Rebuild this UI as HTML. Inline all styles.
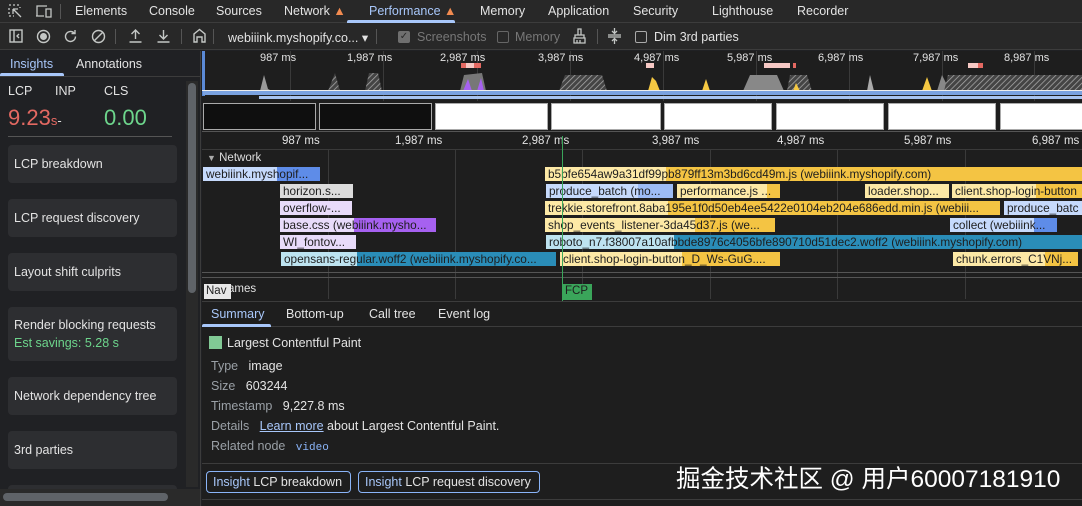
<!DOCTYPE html>
<html><head><meta charset="utf-8"><style>
*{box-sizing:border-box;margin:0;padding:0}
body{width:1082px;height:506px;overflow:hidden;background:#202124;font-family:"Liberation Sans",sans-serif;font-size:12px;color:#e3e3e3;position:relative}
.a{position:absolute}
.tabs{left:0;top:0;width:1082px;height:23px;background:#282828;border-bottom:1px solid #3c3c3c}
.tabs span{position:absolute;top:4px;font-size:12.5px;color:#e3e3e3}
.tb{left:0;top:23px;width:1082px;height:27px;background:#282828;border-bottom:1px solid #3c3c3c}
.tb span{position:absolute;top:7px;font-size:12.5px}
.side{left:0;top:51px;width:201px;height:455px;background:#202124;border-right:1px solid #3c3c3c}
.card{position:absolute;left:8px;width:169px;height:38px;background:#2d2e31;border-radius:4px;font-size:12.5px;padding:12px 6px;color:#e3e3e3}
.tl{left:202px;top:51px;width:880px;height:250px;background:#1e1e1e}
.bar{position:absolute;height:14px;font-size:11.8px;line-height:14px;color:#1e1e1e;white-space:nowrap;overflow:hidden;padding-left:3px}
.lbl{position:absolute;font-size:11px;color:#e3e3e3}
.vl{position:absolute;width:1px;background:#3a3a3a}
.shot{position:absolute;top:52px;height:27px;border:1px solid #aaa}
.bt{position:absolute;font-size:12.5px}
.k{color:#9aa0a6}
</style></head><body>
<div class="a tabs">
 <svg class="a" style="left:8px;top:4px" width="16" height="15" viewBox="0 0 16 15" fill="none" stroke="#c4c7c5" stroke-width="1.3"><path d="M1 1h2M5 1h2M9 1h2M1 4v2M1 8v2M1 12h2M5 12h1M12 3v1M5 5l8 8M5 5v5M5 5h5"/></svg>
 <svg class="a" style="left:35px;top:4px" width="18" height="15" viewBox="0 0 18 15" fill="none" stroke="#c4c7c5" stroke-width="1.3"><path d="M2 12V2h10M1 12h8M11 5h5v8h-5z"/></svg>
 <div class="a" style="left:60px;top:4px;width:1px;height:15px;background:#555"></div>
 <span style="left:75px">Elements</span><span style="left:149px">Console</span><span style="left:216px">Sources</span>
 <span style="left:284px">Network <b style="color:#f28b50">▲</b></span>
 <span style="left:369px;color:#a8c7fa">Performance <b style="color:#f28b50">▲</b></span>
 <div class="a" style="left:347px;top:20px;width:108px;height:3px;background:#a8c7fa;border-radius:2px 2px 0 0"></div>
 <span style="left:480px">Memory</span><span style="left:548px">Application</span><span style="left:633px">Security</span><span style="left:712px">Lighthouse</span><span style="left:797px">Recorder</span>
</div>
<div class="a tb">
 <svg class="a" style="left:9px;top:6px" width="14" height="14" viewBox="0 0 14 14" fill="none" stroke="#c4c7c5" stroke-width="1.4"><rect x="1" y="1" width="12" height="12"/><path d="M5 1v12M10 5l-2 2 2 2"/></svg>
 <svg class="a" style="left:36px;top:6px" width="15" height="15" viewBox="0 0 15 15"><circle cx="7.5" cy="7.5" r="6" fill="none" stroke="#c4c7c5" stroke-width="1.4"/><circle cx="7.5" cy="7.5" r="3.5" fill="#c4c7c5"/></svg>
 <svg class="a" style="left:63px;top:6px" width="15" height="15" viewBox="0 0 15 15" fill="none" stroke="#c4c7c5" stroke-width="1.4"><path d="M12.5 7.5a5 5 0 1 1-1.5-3.6M12 1v3.5H8.5"/></svg>
 <svg class="a" style="left:91px;top:6px" width="15" height="15" viewBox="0 0 15 15" fill="none" stroke="#c4c7c5" stroke-width="1.4"><circle cx="7.5" cy="7.5" r="6"/><path d="M3.5 11.5l8-8"/></svg>
 <div class="a" style="left:115px;top:6px;width:1px;height:15px;background:#555"></div>
 <svg class="a" style="left:128px;top:5px" width="15" height="16" viewBox="0 0 15 16" fill="none" stroke="#c4c7c5" stroke-width="1.4"><path d="M7.5 11V2M3.5 6l4-4 4 4M1.5 14h12"/></svg>
 <svg class="a" style="left:156px;top:5px" width="15" height="16" viewBox="0 0 15 16" fill="none" stroke="#c4c7c5" stroke-width="1.4"><path d="M7.5 2v9M3.5 7l4 4 4-4M1.5 14h12"/></svg>
 <div class="a" style="left:181px;top:6px;width:1px;height:15px;background:#555"></div>
 <svg class="a" style="left:192px;top:5px" width="15" height="16" viewBox="0 0 15 16" fill="none" stroke="#c4c7c5" stroke-width="1.4"><path d="M2 14V6l5.5-4.5L13 6v8h-3V9H5v5z"/></svg>
 <div class="a" style="left:213px;top:6px;width:1px;height:15px;background:#555"></div>
 <span style="left:228px">webiiink.myshopify.co... ▾</span>
 <div class="a" style="left:376px;top:6px;width:1px;height:15px;background:#555"></div>
 <div class="a" style="left:398px;top:8px;width:12px;height:12px;background:#6f6f6f;border-radius:2px;color:#282828;font-size:10px;line-height:12px;text-align:center">✓</div>
 <span style="left:417px;color:#777">Screenshots</span>
 <div class="a" style="left:497px;top:8px;width:12px;height:12px;border:1px solid #666;border-radius:2px"></div>
 <span style="left:515px;color:#777">Memory</span>
 <svg class="a" style="left:572px;top:5px" width="15" height="16" viewBox="0 0 15 16" fill="none" stroke="#c4c7c5" stroke-width="1.3"><path d="M6 1h3v6H6zM3 7h9v3H3zM2 10h11v5H2zM5 12v3M8 12v3"/></svg>
 <div class="a" style="left:597px;top:6px;width:1px;height:15px;background:#555"></div>
 <svg class="a" style="left:607px;top:4px" width="15" height="18" viewBox="0 0 15 18" fill="none" stroke="#c4c7c5" stroke-width="1.3"><path d="M1 8h13M1 10h13M7.5 1v5M5 4l2.5 2.5L10 4M7.5 17v-5M5 14l2.5-2.5L10 14"/></svg>
 <div class="a" style="left:635px;top:8px;width:12px;height:12px;border:1px solid #aaa;border-radius:2px"></div>
 <span style="left:654px">Dim 3rd parties</span>
</div>
<div class="a side">
 <div class="a" style="left:10px;top:6px;font-size:12.5px;color:#a8c7fa">Insights</div>
 <div class="a" style="left:0;top:22px;width:64px;height:3px;background:#a8c7fa;border-radius:2px 2px 0 0"></div>
 <div class="a" style="left:76px;top:6px;font-size:12.5px">Annotations</div>
 <div class="a" style="left:0;top:25px;width:200px;height:1px;background:#3c3c3c"></div>
 <div class="a" style="left:8px;top:33px;font-size:12.5px">LCP</div><div class="a" style="left:55px;top:33px;font-size:12.5px">INP</div><div class="a" style="left:104px;top:33px;font-size:12.5px">CLS</div>
 <div class="a" style="left:8px;top:54px;font-size:22px;color:#e46962">9.23<span style="font-size:13px">s</span><span style="font-size:13px;color:#ddd">-</span></div>
 <div class="a" style="left:104px;top:54px;font-size:22px;color:#6dd58c">0.00</div>
 <div class="a" style="left:8px;top:85px;width:164px;height:1px;background:#555"></div>
 <div class="card" style="top:94px">LCP breakdown</div>
 <div class="card" style="top:148px">LCP request discovery</div>
 <div class="card" style="top:202px">Layout shift culprits</div>
 <div class="card" style="top:256px;height:54px;padding-top:11px">Render blocking requests<div style="color:#6dd58c;margin-top:4px">Est savings: 5.28 s</div></div>
 <div class="card" style="top:326px">Network dependency tree</div>
 <div class="card" style="top:380px">3rd parties</div>
 <div class="card" style="top:434px;height:16px;padding:0"></div>
 <div class="a" style="left:186px;top:30px;width:12px;height:406px;background:#2a2a2a"></div>
 <div class="a" style="left:188px;top:32px;width:8px;height:210px;background:#5f6368;border-radius:4px"></div>
 <div class="a" style="left:0;top:438px;width:200px;height:17px;background:#2a2a2a"></div>
 <div class="a" style="left:3px;top:442px;width:165px;height:8px;background:#5f6368;border-radius:4px"></div>
</div>
<div class="a tl">
 <div class="vl" style="left:88px;top:0;height:50px"></div><div class="vl" style="left:181px;top:0;height:50px"></div><div class="vl" style="left:275px;top:0;height:50px"></div><div class="vl" style="left:368px;top:0;height:50px"></div><div class="vl" style="left:461px;top:0;height:50px"></div><div class="vl" style="left:554px;top:0;height:50px"></div><div class="vl" style="left:647px;top:0;height:50px"></div><div class="vl" style="left:740px;top:0;height:50px"></div><div class="vl" style="left:832px;top:0;height:50px"></div>
 <div class="lbl" style="left:58px;top:1px">987 ms</div><div class="lbl" style="left:145px;top:1px">1,987 ms</div><div class="lbl" style="left:238px;top:1px">2,987 ms</div><div class="lbl" style="left:336px;top:1px">3,987 ms</div><div class="lbl" style="left:432px;top:1px">4,987 ms</div><div class="lbl" style="left:525px;top:1px">5,987 ms</div><div class="lbl" style="left:616px;top:1px">6,987 ms</div><div class="lbl" style="left:711px;top:1px">7,987 ms</div><div class="lbl" style="left:802px;top:1px">8,987 ms</div>
 <div class="a" style="left:0;top:0;width:3px;height:45px;background:#5b8ad6"></div>
 <svg class="a" style="left:0;top:12px" width="880" height="28" viewBox="0 0 880 28">
  <defs><pattern id="h" width="4" height="4" patternUnits="userSpaceOnUse" patternTransform="rotate(45)"><rect width="4" height="4" fill="#444"/><path d="M0 0v4" stroke="#aaa" stroke-width="1.5"/></pattern></defs>
  <path d="M58 28L62 12 66 26 70 28z" fill="#999"/>
  <path d="M126 28L133 10 138 28z" fill="url(#h)"/><path d="M163 28L167 10 176 10 180 28z" fill="url(#h)"/>
  <path d="M258 28L262 12 280 10 284 28z" fill="#777"/><path d="M261 28L266 16 270 28zM275 28L279 15 282 28z" fill="#a661f0"/>
  <path d="M357 28L363 12 400 12 405 28z" fill="url(#h)"/>
  <path d="M446 28L450 14 454 18 458 28z" fill="#f5c842"/>
  <path d="M500 28L504 16 508 28z" fill="#f5c842"/><path d="M541 28L548 12 575 12 582 28z" fill="#888"/>
  <path d="M585 28L588 12 605 12 610 28z" fill="url(#h)"/><path d="M591 28L594 20 598 28z" fill="#f5c842"/>
  <path d="M665 28L668 12 672 28z" fill="#aaa"/>
  <path d="M720 28L725 14 730 28z" fill="#f5c842"/><path d="M735 28L740 12 748 28z" fill="#888"/><path d="M742 28L746 12 880 12 880 28z" fill="url(#h)"/>
  <path d="M0 27.5H880" stroke="#eee" stroke-width="1"/>
 </svg>
 <div class="a" style="left:259px;top:12px;width:20px;height:5px;background:#e46962"></div><div class="a" style="left:264px;top:12px;width:8px;height:5px;background:#f6c8c4"></div>
 <div class="a" style="left:444px;top:12px;width:8px;height:5px;background:#f6c8c4"></div>
 <div class="a" style="left:562px;top:12px;width:26px;height:5px;background:#f6c8c4"></div><div class="a" style="left:591px;top:12px;width:3px;height:5px;background:#e46962"></div>
 <div class="a" style="left:766px;top:12px;width:10px;height:5px;background:#f6c8c4"></div><div class="a" style="left:776px;top:12px;width:5px;height:5px;background:#e46962"></div>
 <div class="a" style="left:1px;top:40px;width:879px;height:4px;background:#7aa2e0"></div>
 <div class="a" style="left:57px;top:45px;width:823px;height:3px;background:#a8c4f0"></div>
 <div class="shot" style="left:1px;width:113px;background:#0f0f0f"></div>
 <div class="shot" style="left:117px;width:113px;background:#0f0f0f"></div>
 <div class="shot" style="left:233px;width:113px;background:#fff"></div>
 <div class="shot" style="left:349px;width:110px;background:#fff"></div>
 <div class="shot" style="left:462px;width:108px;background:#fff"></div>
 <div class="shot" style="left:574px;width:108px;background:#fff"></div>
 <div class="shot" style="left:686px;width:108px;background:#fff"></div>
 <div class="shot" style="left:798px;width:108px;background:#fff"></div>
 <div class="a" style="left:0;top:80px;width:880px;height:1px;background:#555"></div>
 <div class="lbl" style="left:80px;top:84px;font-size:11.5px">987 ms</div><div class="lbl" style="left:193px;top:84px;font-size:11.5px">1,987 ms</div><div class="lbl" style="left:320px;top:84px;font-size:11.5px">2,987 ms</div><div class="lbl" style="left:450px;top:84px;font-size:11.5px">3,987 ms</div><div class="lbl" style="left:575px;top:84px;font-size:11.5px">4,987 ms</div><div class="lbl" style="left:702px;top:84px;font-size:11.5px">5,987 ms</div><div class="lbl" style="left:830px;top:84px;font-size:11.5px">6,987 ms</div>
 <div class="vl" style="left:126px;top:98px;height:150px"></div><div class="vl" style="left:253px;top:98px;height:150px"></div><div class="vl" style="left:380px;top:98px;height:150px"></div><div class="vl" style="left:508px;top:98px;height:150px"></div><div class="vl" style="left:635px;top:98px;height:150px"></div><div class="vl" style="left:763px;top:98px;height:150px"></div>
 <div class="a" style="left:0;top:98px;width:880px;height:1px;background:#3a3a3a"></div>
 <div class="lbl" style="left:5px;top:101px;font-size:11.5px;color:#ddd"><span style="color:#aaa;font-size:9px">▼</span> Network</div>
 <div class="bar" style="left:1px;top:116px;width:117px;background:linear-gradient(90deg,#c6dafc 74px,#5e8ce8 74px)">webiiink.myshopif...</div>
 <div class="bar" style="left:78px;top:133px;width:73px;background:#dcdcdc">horizon.s...</div>
 <div class="bar" style="left:78px;top:150px;width:72px;background:#e8dbfa">overflow-...</div>
 <div class="bar" style="left:78px;top:167px;width:156px;background:linear-gradient(90deg,#e8dbfa 74px,#a661f0 74px)">base.css (webiiink.mysho...</div>
 <div class="bar" style="left:78px;top:184px;width:76px;background:#e8dbfa">WI_fontov...</div>
 <div class="bar" style="left:79px;top:201px;width:275px;background:linear-gradient(90deg,#bde3f0 76px,#2a8db8 76px)">opensans-regular.woff2 (webiiink.myshopify.co...</div>
 <div class="bar" style="left:343px;top:116px;width:537px;background:linear-gradient(90deg,#fde9a6 121px,#f4c443 121px)">b5bfe654aw9a31df99pb879ff13m3bd6cd49m.js (webiiink.myshopify.com)</div>
 <div class="bar" style="left:344px;top:133px;width:127px;background:linear-gradient(90deg,#c6dafc 92px,#9dbcf5 92px)">produce_batch (mo...</div>
 <div class="bar" style="left:475px;top:133px;width:103px;background:linear-gradient(90deg,#fde9a6 90px,#f4c443 90px)">performance.js ...</div>
 <div class="bar" style="left:663px;top:133px;width:84px;background:#fde9a6">loader.shop...</div>
 <div class="bar" style="left:750px;top:133px;width:130px;background:linear-gradient(90deg,#fde9a6 84px,#f4c443 84px)">client.shop-login-button</div>
 <div class="bar" style="left:343px;top:150px;width:455px;background:linear-gradient(90deg,#fde9a6 123px,#f4c443 123px)">trekkie.storefront.8aba195e1f0d50eb4ee5422e0104eb204e686edd.min.js (webiii...</div>
 <div class="bar" style="left:802px;top:150px;width:78px;background:#c6dafc">produce_batc</div>
 <div class="bar" style="left:343px;top:167px;width:230px;background:linear-gradient(90deg,#fde9a6 150px,#f4c443 150px)">shop_events_listener-3da45d37.js (we...</div>
 <div class="bar" style="left:748px;top:167px;width:107px;background:linear-gradient(90deg,#c6dafc 84px,#5e8ce8 84px)">collect (webiiink...</div>
 <div class="bar" style="left:344px;top:184px;width:536px;background:linear-gradient(90deg,#bde3f0 128px,#2a8db8 128px)">roboto_n7.f38007a10afbbde8976c4056bfe890710d51dec2.woff2 (webiiink.myshopify.com)</div>
 <div class="bar" style="left:358px;top:201px;width:220px;background:linear-gradient(90deg,#fde9a6 122px,#f4c443 122px)">client.shop-login-button_D_Ws-GuG....</div>
 <div class="bar" style="left:751px;top:201px;width:125px;background:linear-gradient(90deg,#fde9a6 92px,#f4c443 92px)">chunk.errors_C1VNj...</div>
 <div class="a" style="left:0;top:221px;width:880px;height:1px;background:#555"></div>
 <div class="a" style="left:0;top:226px;width:880px;height:1px;background:#555"></div>
 <div class="lbl" style="left:26px;top:232px;font-size:11.5px">ames</div>
 <div class="a" style="left:2px;top:233px;width:27px;height:15px;background:#e8e8e8;color:#222;font-size:11.5px;padding:1px 2px">Nav</div>
 <div class="a" style="left:360px;top:85px;width:1px;height:165px;background:#3aa55a"></div>
 <div class="a" style="left:360px;top:233px;width:30px;height:16px;background:#3aa55a;color:#1e1e1e;font-size:11.5px;padding:1px 3px">FCP</div>
</div>
<div class="a" style="left:202px;top:301px;width:880px;height:205px;background:#1e1e1e;border-top:1px solid #3c3c3c">
 <div class="a" style="left:0;top:0;width:880px;height:25px;border-bottom:1px solid #3c3c3c"></div>
 <div class="bt" style="left:9px;top:5px;color:#a8c7fa">Summary</div>
 <div class="a" style="left:0;top:22px;width:69px;height:3px;background:#a8c7fa;border-radius:2px 2px 0 0"></div>
 <div class="bt" style="left:84px;top:5px">Bottom-up</div><div class="bt" style="left:167px;top:5px">Call tree</div><div class="bt" style="left:236px;top:5px">Event log</div>
 <div class="a" style="left:7px;top:34px;width:13px;height:13px;background:#81c995"></div>
 <div class="bt" style="left:25px;top:34px">Largest Contentful Paint</div>
 <div class="bt" style="left:9px;top:57px"><span class="k">Type</span>&nbsp;&nbsp; image</div>
 <div class="bt" style="left:9px;top:77px"><span class="k">Size</span>&nbsp;&nbsp; 603244</div>
 <div class="bt" style="left:9px;top:97px"><span class="k">Timestamp</span>&nbsp;&nbsp; 9,227.8 ms</div>
 <div class="bt" style="left:9px;top:117px"><span class="k">Details</span>&nbsp;&nbsp; <span style="color:#a8c7fa;text-decoration:underline">Learn more</span> about Largest Contentful Paint.</div>
 <div class="bt" style="left:9px;top:137px"><span class="k">Related node</span>&nbsp;&nbsp; <span style="color:#8ab4f8;font-family:'Liberation Mono',monospace;font-size:11px">video</span></div>
 <div class="a" style="left:0;top:161px;width:880px;height:1px;background:#3c3c3c"></div>
 <div class="a" style="left:4px;top:169px;width:145px;height:22px;border:1px solid #8ab4f8;border-radius:4px;padding:3px 6px;font-size:12.5px;white-space:nowrap"><span style="color:#a8c7fa">Insight</span> LCP breakdown</div>
 <div class="a" style="left:156px;top:169px;width:182px;height:22px;border:1px solid #8ab4f8;border-radius:4px;padding:3px 6px;font-size:12.5px;white-space:nowrap"><span style="color:#a8c7fa">Insight</span> LCP request discovery</div>
 <div class="a" style="left:0;top:197px;width:880px;height:1px;background:#3c3c3c"></div>
 <div class="a" style="left:474px;top:158px;font-size:24.5px;color:#fff;font-family:'Liberation Sans','Noto Sans CJK SC',sans-serif;white-space:nowrap">掘金技术社区 @ 用户60007181910</div>
</div>
</body></html>
